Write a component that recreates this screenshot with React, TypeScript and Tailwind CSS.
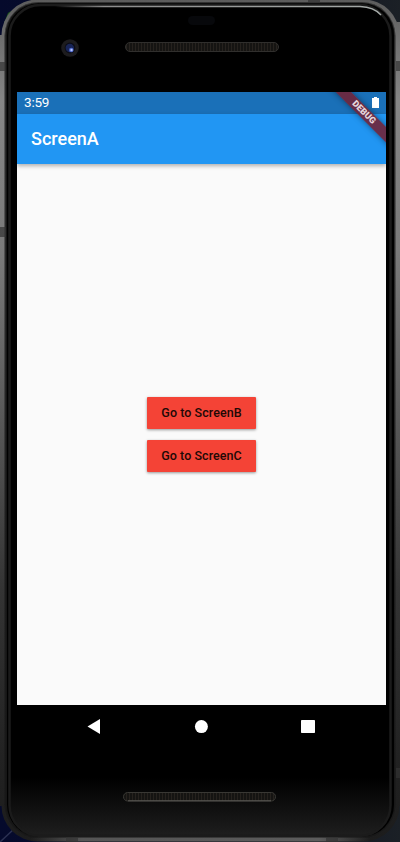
import React from "react";

const roboto = "font-[Roboto,'Liberation_Sans',sans-serif]";

function Bezel() {
  return (
    <svg className="absolute inset-0" width="400" height="842" viewBox="0 0 400 842" aria-hidden="true">
      <defs>
        <linearGradient id="desk" x1="0" x2="1" y1="0" y2="0">
          <stop offset="0" stopColor="#050a2c" />
          <stop offset=".6" stopColor="#0a0d20" />
          <stop offset="1" stopColor="#1b2026" />
        </linearGradient>
        <linearGradient id="metal" gradientUnits="userSpaceOnUse" x1="0" x2="0" y1="0" y2="842">
          <stop offset="0" stopColor="#5c5c5c" />
          <stop offset=".05" stopColor="#707070" />
          <stop offset=".12" stopColor="#868686" />
          <stop offset=".3" stopColor="#7a7a7a" />
          <stop offset=".5" stopColor="#585858" />
          <stop offset=".7" stopColor="#343434" />
          <stop offset=".9" stopColor="#222" />
          <stop offset="1" stopColor="#1c1c1c" />
        </linearGradient>
        <linearGradient id="face" x1="0" x2="0" y1="0" y2="1">
          <stop offset="0" stopColor="#000" />
          <stop offset=".93" stopColor="#000" />
          <stop offset="1" stopColor="#1e1e1e" />
        </linearGradient>
        <linearGradient id="shine" gradientUnits="userSpaceOnUse" x1="55" x2="381" y1="0" y2="0">
          <stop offset="0" stopColor="#999" stopOpacity="0" />
          <stop offset=".15" stopColor="#8c8c8c" />
          <stop offset="1" stopColor="#a5aaa8" />
        </linearGradient>
        <linearGradient id="foot" gradientUnits="userSpaceOnUse" x1="30" x2="370" y1="0" y2="0">
          <stop offset="0" stopColor="#555" stopOpacity="0" />
          <stop offset=".15" stopColor="#555" />
          <stop offset=".85" stopColor="#5c5c5c" />
          <stop offset="1" stopColor="#666" stopOpacity="0" />
        </linearGradient>
        <pattern id="mesh" width="3" height="8" patternUnits="userSpaceOnUse">
          <rect width="3" height="8" fill="#151412" />
          <rect width="1" height="8" fill="#26221e" />
        </pattern>
      </defs>
      <rect width="400" height="842" fill="url(#desk)" />
      <path d="M4 23L8 13L11 11L6 27Z" fill="#245c20" />
      <path d="M0 842L14 829" stroke="#2b3152" strokeWidth="1.5" />
      <path d="M0 35H3V806H0ZM397 22H400V806H397Z" fill="url(#metal)" />
      <rect x="1.5" y="-.5" width="398" height="842" rx="36" fill="url(#metal)" />
      <rect x="4.5" y="2" width="391" height="836" rx="34" fill="#161616" />
      <rect x="5" y="2.5" width="390" height="835" rx="33" fill="none" stroke="url(#metal)" strokeOpacity=".4" />
      <rect x="7" y="3.5" width="387" height="833" rx="32" fill="#000" />
      <rect x="9.5" y="5" width="381" height="831" rx="31" fill="url(#face)" stroke="#1b1b1b" strokeWidth="2.5" />
      <path d="M55 6.5H360Q374 7 381 15" fill="none" stroke="url(#shine)" strokeWidth="1.4" />
      <path d="M30 839.5H370" stroke="url(#foot)" strokeWidth="4" />
      <path d="M0 62H5V71H0ZM0 227H6V237H0ZM396 61H400V71H396ZM396 768H400V778H396ZM66 837H78V842H66ZM326 837H338V842H326ZM308 0H320V2H308Z" fill="#333" fillOpacity=".7" />
      <rect x="188" y="16" width="27" height="9" rx="4.5" fill="#07080b" />
      <circle cx="70" cy="48" r="8.8" fill="#1d1c1e" />
      <circle cx="70" cy="48" r="5.4" fill="#0b0c16" />
      <circle cx="69.8" cy="48" r="4.2" fill="#182456" />
      <circle cx="71.3" cy="50" r="2.3" fill="#4b66c8" />
      <circle cx="71.5" cy="50" r="1.2" fill="#b7c5ff" />
      <rect x="125.5" y="42.5" width="153" height="9" rx="4.5" fill="url(#mesh)" stroke="#302f2d" />
      <rect x="123.5" y="792.5" width="152" height="8.5" rx="4.2" fill="url(#mesh)" stroke="#393834" />
      <path d="M128 800.8H271" stroke="#5b5954" strokeWidth="1" />
    </svg>
  );
}

function StatusBar() {
  return (
    <div className="flex h-[22px] items-center justify-between bg-[#1a70b8] px-[7px] text-white">
      <span className="text-[13.5px] leading-none tracking-[-0.2px]">3:59</span>
      <svg className="mb-[2px]" width="7" height="11" viewBox="0 0 7 11" fill="white">
        <path d="M2 0H5V1H7V11H0V1H2Z" />
      </svg>
    </div>
  );
}

function DebugBanner() {
  return (
    <div className="absolute right-0 top-0 h-[60px] w-[62px] overflow-hidden">
      <div className="absolute left-[-7px] top-[15px] flex h-[10.5px] w-[94px] rotate-45 items-center justify-center bg-[#702339]/90 text-[9px] font-black leading-none text-[#e6d6dc] shadow-[0_0_6px_rgba(0,0,0,0.45)]">
        DEBUG
      </div>
    </div>
  );
}

function RaisedButton({ label }: { label: string }) {
  return (
    <button className="h-[32px] w-[109px] whitespace-nowrap rounded-[1px] bg-[#f44336] text-[12.5px] font-medium tracking-[0.06px] text-[#210906] shadow-[0_1px_3px_rgba(0,0,0,0.4)]">
      {label}
    </button>
  );
}

function NavigationBar() {
  return (
    <nav className="flex h-[43px] items-center justify-between bg-black pl-[70px] pr-[71px]">
      <svg width="14" height="16" viewBox="0 0 14 16" fill="white">
        <path d="M.5 7.5L13 0V15Z" />
      </svg>
      <svg width="14" height="14" viewBox="0 0 14 14" fill="white">
        <circle cx="7.4" cy="6.6" r="6.5" />
      </svg>
      <svg width="14" height="14" viewBox="0 0 14 14" fill="white">
        <rect width="14" height="13" rx=".7" />
      </svg>
    </nav>
  );
}

export default function App() {
  return (
    <div className={`relative h-[842px] w-[400px] overflow-hidden ${roboto}`}>
      <Bezel />
      <main className="relative ml-[17px] flex w-[369px] flex-col pt-[92px]">
        <div className="relative flex h-[613px] flex-col bg-[#fafafa]">
          <StatusBar />
          <header className="flex h-[50px] items-center bg-[#2196f3] pb-[1px] pl-[14px] text-[18px] font-medium text-white shadow-[0_2px_4px_rgba(0,0,0,0.3)]">
            ScreenA
          </header>
          <div className="flex flex-1 flex-col items-center justify-center gap-[11px]">
            <RaisedButton label="Go to ScreenB" />
            <RaisedButton label="Go to ScreenC" />
          </div>
          <DebugBanner />
        </div>
        <NavigationBar />
      </main>
    </div>
  );
}
